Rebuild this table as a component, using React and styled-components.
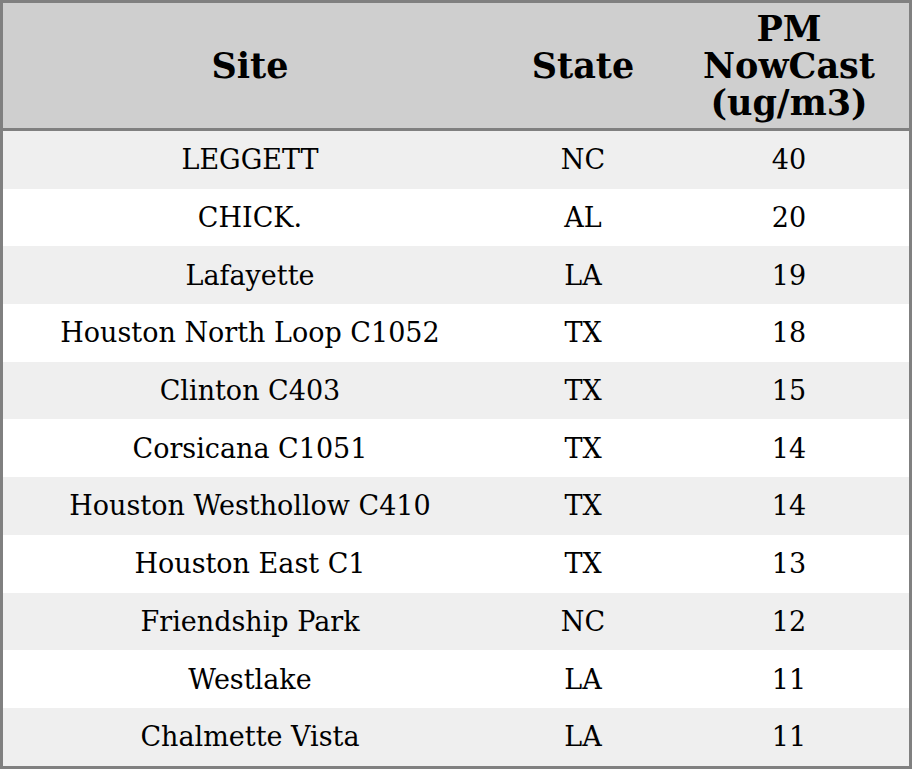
import React from "react";
import styled, { createGlobalStyle } from "styled-components";

const Global = createGlobalStyle`
  html, body { margin: 0; padding: 0; background: #ffffff; }
  body { font-family: "DejaVu Serif", "Liberation Serif", serif; }
`;

const Table = styled.table`
  width: 912px;
  border-collapse: separate;
  border-spacing: 0;
  border: 3px solid #808080;
  table-layout: fixed;
  font-family: "DejaVu Serif", "Liberation Serif", serif;
  color: #000;
`;

const Col = styled.col`
  width: ${(p) => p.$w}px;
`;

const HeadCell = styled.th`
  height: 125px;
  padding: 0;
  background: #cfcfcf;
  border-bottom: 3px solid #808080;
  font-size: 35px;
  font-weight: bold;
  line-height: 37px;
  text-align: center;
  vertical-align: middle;
`;

const Row = styled.tr`
  background: ${(p) => (p.$alt ? "#efefef" : "#ffffff")};
`;

const Cell = styled.td`
  height: 57.7px;
  padding: 0;
  font-size: 27px;
  text-align: center;
  vertical-align: middle;
  white-space: nowrap;
`;

const rows = [
  ["LEGGETT", "NC", 40],
  ["CHICK.", "AL", 20],
  ["Lafayette", "LA", 19],
  ["Houston North Loop C1052", "TX", 18],
  ["Clinton C403", "TX", 15],
  ["Corsicana C1051", "TX", 14],
  ["Houston Westhollow C410", "TX", 14],
  ["Houston East C1", "TX", 13],
  ["Friendship Park", "NC", 12],
  ["Westlake", "LA", 11],
  ["Chalmette Vista", "LA", 11],
];

export default function App() {
  return (
    <>
      <Global />
      <Table>
        <colgroup>
          <Col $w={494} />
          <Col $w={172} />
          <Col $w={240} />
        </colgroup>
        <thead>
          <tr>
            <HeadCell>Site</HeadCell>
            <HeadCell>State</HeadCell>
            <HeadCell>
              PM
              <br />
              NowCast
              <br />
              (ug/m3)
            </HeadCell>
          </tr>
        </thead>
        <tbody>
          {rows.map(([site, state, value], i) => (
            <Row key={site} $alt={i % 2 === 0}>
              <Cell>{site}</Cell>
              <Cell>{state}</Cell>
              <Cell>{value}</Cell>
            </Row>
          ))}
        </tbody>
      </Table>
    </>
  );
}
